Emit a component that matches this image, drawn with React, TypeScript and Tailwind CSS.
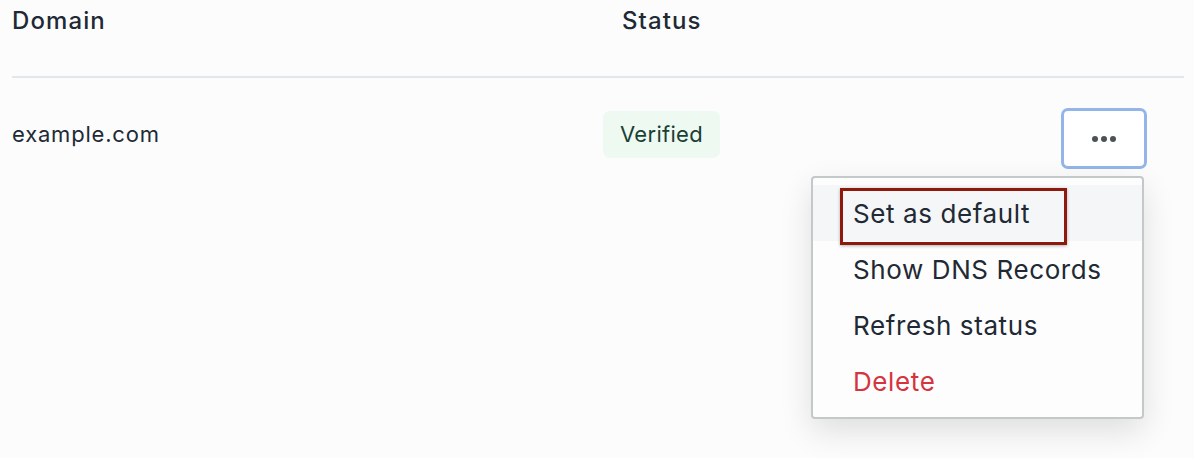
import React from "react";

export default function App() {
  return (
    <div
      className="relative w-[1194px] h-[458px] overflow-hidden bg-[#fcfcfd] text-[#212934]"
      style={{ fontFamily: "Inter, 'Noto Sans', sans-serif" }}
    >
      <div className="pl-3 pr-[10px]">
        <div className="flex h-[78px] border-b-2 border-[#e3e7ec]">
          <div className="w-[610px] pt-[3px] text-[24px] font-medium leading-[36px] tracking-[1.1px]">Domain</div>
          <div className="pt-[3px] text-[24px] font-medium leading-[36px] tracking-[1.1px]">Status</div>
        </div>
        <div className="flex h-[112px] items-center">
          <div className="w-[591px] text-[22px] leading-[30px] tracking-[0.8px]">example.com</div>
          <div className="flex h-[47px] items-center rounded-[7px] bg-[#eef9f2] px-[17px] text-[22px] tracking-[0.3px] text-[#1a4033]">
            Verified
          </div>
          <div className="flex-1" />
          <button className="mr-[37px] mt-[9px] flex h-[61px] w-[86px] items-center justify-center gap-[3px] rounded-[7px] border-[3px] border-[#93b5ea] bg-white">
            <span className="h-[6px] w-[6px] rounded-full bg-[#4b5358]" />
            <span className="h-[6px] w-[6px] rounded-full bg-[#4b5358]" />
            <span className="h-[6px] w-[6px] rounded-full bg-[#4b5358]" />
          </button>
        </div>
      </div>

      <div className="absolute left-[811px] top-[176px] w-[333px] rounded-[4px] border-2 border-[#c3c8c8] bg-[#fdfdfd] pt-[7px] pb-[8px] shadow-[0_12px_32px_rgba(0,0,0,0.12)]">
        <div className="relative flex h-[56px] items-center bg-[#f4f6f8] pl-[40px] text-[26px] tracking-[0.6px]">
          <div className="absolute left-[27px] top-[3px] h-[57px] w-[227px] border-[3px] border-[#8c1a0d] shadow-[0_1px_3px_rgba(0,0,0,0.3)]" />
          <span className="relative">Set as default</span>
        </div>
        <div className="flex h-[56px] items-center pl-[40px] text-[26px] tracking-[0.6px]">Show DNS Records</div>
        <div className="flex h-[56px] items-center pl-[40px] text-[26px] tracking-[0.6px]">Refresh status</div>
        <div className="flex h-[56px] items-center pl-[40px] text-[26px] tracking-[0.6px] text-[#d5343f]">Delete</div>
      </div>
    </div>
  );
}
